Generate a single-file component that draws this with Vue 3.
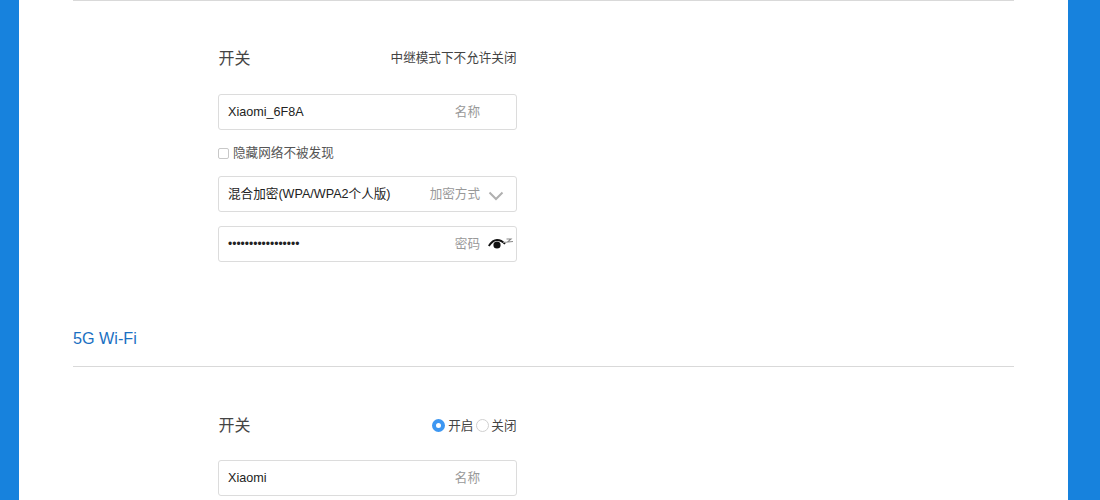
<script setup>
const dots = '•'.repeat(17)
</script>

<template>
  <div class="page">
    <main class="panel">
      <section class="section first">
        <div class="form">
          <div class="switch-row">
            <span class="label">开关</span>
            <span class="note">中继模式下不允许关闭</span>
          </div>
          <div class="field">
            <span class="value latin">Xiaomi_6F8A</span>
            <span class="hint">名称</span>
          </div>
          <label class="check-row">
            <span class="check"></span>
            <span class="check-text">隐藏网络不被发现</span>
          </label>
          <div class="field">
            <span class="value cjk">混合加密(WPA/WPA2个人版)</span>
            <span class="hint">加密方式</span>
            <svg class="chevron" width="16" height="10" viewBox="0 0 16 10">
              <path d="M1.500 1.500 8 8l6.500-6.500" fill="none" stroke="#b0b0b0" stroke-width="2" />
            </svg>
          </div>
          <div class="field gap">
            <span class="value dots">{{ dots }}</span>
            <span class="hint">密码</span>
            <svg class="eye" width="25" height="14" viewBox="0 0 25 14">
              <path d="M0.800 10C3.500 5.800 6.200 4 9 4s5.500 1.200 8 4" fill="none" stroke="#111" stroke-width="1.800" />
              <circle cx="9" cy="9" r="3.600" fill="#111" />
              <path d="M15 6.500 25 5.500M18.500 3h4.500L19.500 6" fill="none" stroke="#888" stroke-width="1.100" />
            </svg>
          </div>
        </div>
      </section>
      <h2 class="title">5G Wi-Fi</h2>
      <section class="section">
        <div class="form">
          <div class="switch-row">
            <span class="label">开关</span>
            <span class="radios">
              <span class="radio on"></span><span class="radio-text">开启</span>
              <span class="radio"></span><span>关闭</span>
            </span>
          </div>
          <div class="field">
            <span class="value latin">Xiaomi</span>
            <span class="hint">名称</span>
          </div>
        </div>
      </section>
    </main>
  </div>
</template>

<style>
html, body { margin: 0; overflow: hidden; }
</style>

<style scoped>
.page {
  height: 500px;
  overflow: hidden;
  background: #1782dd;
  padding-left: 19px;
  padding-right: 32px;
  font-family: "Liberation Sans", "Noto Sans CJK SC", sans-serif;
  color: #333;
}
.panel {
  background: #fff;
  height: 500px;
  padding: 0 54px;
}
.section {
  border-top: 1px solid #d9d9d9;
  padding-left: 145px;
}
.form { width: 298.500px; }
.switch-row {
  box-sizing: border-box;
  height: 36px;
  padding-bottom: 2px;
  margin-top: 40px;
  margin-bottom: 17px;
  display: flex;
  align-items: center;
  justify-content: space-between;
}
.first .switch-row { margin-top: 39px; margin-bottom: 18px; }
.label { font-size: 16px; color: #444; padding-left: 0.500px; }
.note { font-size: 12.600px; color: #444; padding-bottom: 2px; }
.field {
  box-sizing: border-box;
  height: 36px;
  border: 1px solid #dcdcdc;
  border-radius: 3px;
  display: flex;
  align-items: center;
  padding: 0 35.500px 2px 9px;
  position: relative;
  font-size: 12.600px;
}
.field.gap { margin-top: 14px; }
.value { flex: 1; color: #222; white-space: nowrap; }
.latin { padding-top: 2px; }
.cjk { padding-bottom: 2px; }
.dots { font-size: 12px; padding-top: 1px; }
.hint { color: #999; white-space: nowrap; padding-bottom: 2px; }
.chevron { position: absolute; right: 12px; top: 14px; }
.eye { position: absolute; right: 3px; top: 9px; }
.check-row {
  box-sizing: border-box;
  height: 46px;
  padding-bottom: 2px;
  display: flex;
  align-items: center;
  font-size: 12.600px;
  color: #555;
  gap: 4px;
}
.check-text { padding-bottom: 2px; }
.check {
  box-sizing: border-box;
  width: 11px;
  height: 11px;
  border: 1px solid #c8c8c8;
  border-radius: 2px;
  margin-top: 3px;
}
.title {
  margin: 0;
  height: 104px;
  box-sizing: border-box;
  padding-top: 67px;
  font-size: 16.200px;
  line-height: 18px;
  font-weight: 400;
  color: #1a70c2;
}
.radios {
  display: flex;
  align-items: center;
  font-size: 12.600px;
  color: #444;
}
.radio {
  box-sizing: border-box;
  width: 13px;
  height: 13px;
  border-radius: 50%;
  border: 1px solid #d0d0d0;
  margin-right: 2px;
  margin-top: 2px;
}
.radio-text { margin-right: 3px; }
.radio.on {
  border: 4px solid #3d97f2;
  background: #fff;
  margin-right: 3px;
}
</style>
